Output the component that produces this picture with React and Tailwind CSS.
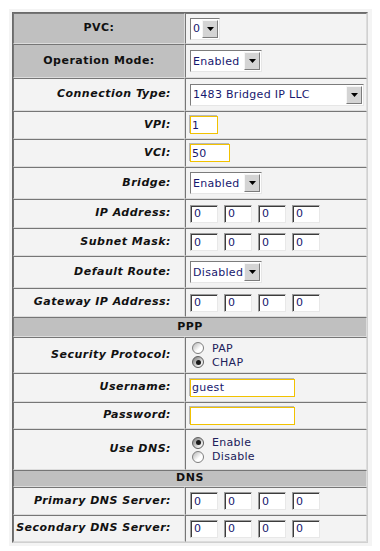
import React from 'react';

const FONT = "font-['DejaVu_Sans',Verdana,sans-serif]";
const CELL = 'border border-[#dcdcdc] border-t-[#767676] border-l-[#767676]';

const Arrow = () => (
  <svg width="7" height="4" viewBox="0 0 7 4">
    <path d="M0 0h7L3.5 4z" fill="#000" />
  </svg>
);

const Select = ({ value, className }) => (
  <div className={`flex items-center h-[22px] bg-white border border-[#e6e6e6] border-t-[#7c7c7c] border-l-[#7c7c7c] ${className}`}>
    <span className="flex-1 pl-[2px] text-[11px] leading-none tracking-[0.3px] text-[#17176e] whitespace-nowrap overflow-hidden">{value}</span>
    <span className="w-[16px] h-[18px] mr-[1px] shrink-0 flex items-center justify-center bg-[#d4d4d4] border border-[#f6f6f6] border-r-[#7c7c7c] border-b-[#7c7c7c]">
      <Arrow />
    </span>
  </div>
);

const TextInput = ({ value, className }) => (
  <div className={`h-[18px] bg-white border border-[#f2c200] shadow-[-1px_-1px_0_#b8b8b8] flex items-center pl-[1px] text-[11px] leading-none tracking-[0.3px] text-[#17176e] ${className}`}>
    {value}
  </div>
);

const IpBox = () => (
  <div className="w-[28px] h-[18px] bg-white border border-[#e8e8e8] border-t-[#9c9c9c] border-l-[#9c9c9c] shadow-[inset_1px_1px_0_#3c3c3c] flex items-center pl-[3px] text-[11px] leading-none text-[#17176e]">
    0
  </div>
);

const IpAddress = () => (
  <div className="flex gap-[6px]">
    <IpBox />
    <IpBox />
    <IpBox />
    <IpBox />
  </div>
);

const Radio = ({ checked, label }) => (
  <div className="flex items-center h-[14px]">
    <span
      className={`w-[12px] h-[12px] rounded-full border flex items-center justify-center ${
        checked
          ? 'border-[#5e5e5e] bg-[linear-gradient(135deg,#7a7a7a,#eeeeee_75%)]'
          : 'border-[#7e7e7e] bg-[linear-gradient(135deg,#b4b4b4,#ffffff_60%)]'
      }`}
    >
      {checked && <span className="w-[5px] h-[5px] rounded-full bg-[#1a1a1a]" />}
    </span>
    <span className="ml-[8px] text-[11px] leading-none tracking-[0.3px] text-[#20205a]">{label}</span>
  </div>
);

const Row = ({ label, head, height, children }) => (
  <div className={`grid grid-cols-[172px_182px] ${height}`}>
    <div
      className={`${CELL} flex items-center text-[11px] font-bold tracking-[0.5px] text-[#111] ${
        head ? 'justify-center bg-[#c0c0c0]' : 'justify-end pr-[13px] italic bg-[#f3f3f3]'
      }`}
    >
      {label}
    </div>
    <div className={`${CELL} flex items-center pl-[4px] bg-[#f3f3f3]`}>{children}</div>
  </div>
);

const Section = ({ title, height }) => (
  <div className={`${CELL} ${height} flex items-center justify-center bg-[#c0c0c0] text-[11px] font-bold tracking-[0.5px] text-[#111]`}>
    {title}
  </div>
);

export default function App() {
  return (
    <div className={`min-h-[551px] bg-white p-[9px] ${FONT}`}>
      <div className="w-[363px] bg-[#f4f4f4] pt-[3px] pb-[3px] pl-[3px]">
        <div className="w-[356px] border border-[#d0d0d0] border-t-[#6b6b6b] border-l-[#6b6b6b]">
          <Row label="PVC:" head height="h-[31px]">
            <Select value="0" className="w-[30px]" />
          </Row>
          <Row label="Operation Mode:" head height="h-[34px]">
            <Select value="Enabled" className="w-[72px]" />
          </Row>
          <Row label="Connection Type:" height="h-[33px]">
            <Select value="1483 Bridged IP LLC" className="w-[174px]" />
          </Row>
          <Row label="VPI:" height="h-[28px]">
            <TextInput value="1" className="w-[28px]" />
          </Row>
          <Row label="VCI:" height="h-[28px]">
            <TextInput value="50" className="w-[40px]" />
          </Row>
          <Row label="Bridge:" height="h-[32px]">
            <Select value="Enabled" className="w-[72px]" />
          </Row>
          <Row label="IP Address:" height="h-[29px]">
            <IpAddress />
          </Row>
          <Row label="Subnet Mask:" height="h-[28px]">
            <IpAddress />
          </Row>
          <Row label="Default Route:" height="h-[32px]">
            <Select value="Disabled" className="w-[72px]" />
          </Row>
          <Row label="Gateway IP Address:" height="h-[29px]">
            <IpAddress />
          </Row>
          <Section title="PPP" height="h-[20px]" />
          <Row label="Security Protocol:" height="h-[36px]">
            <div className="flex flex-col pl-[2px]">
              <Radio label="PAP" />
              <Radio label="CHAP" checked />
            </div>
          </Row>
          <Row label="Username:" height="h-[29px]">
            <TextInput value="guest" className="w-[105px]" />
          </Row>
          <Row label="Password:" height="h-[27px]">
            <TextInput value="" className="w-[105px]" />
          </Row>
          <Row label="Use DNS:" height="h-[41px]">
            <div className="flex flex-col pl-[2px]">
              <Radio label="Enable" checked />
              <Radio label="Disable" />
            </div>
          </Row>
          <Section title="DNS" height="h-[17px]" />
          <Row label="Primary DNS Server:" height="h-[28px]">
            <IpAddress />
          </Row>
          <Row label="Secondary DNS Server:" height="h-[27px]">
            <IpAddress />
          </Row>
        </div>
      </div>
    </div>
  );
}
